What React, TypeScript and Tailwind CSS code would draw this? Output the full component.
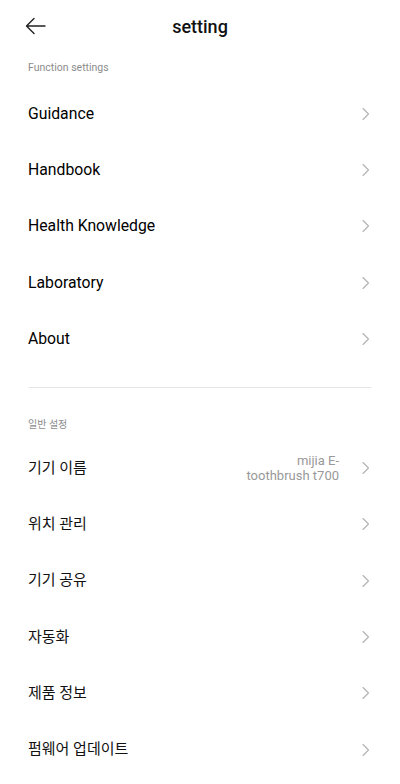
import React from 'react';

const font = { fontFamily: 'Roboto, "Noto Sans CJK KR", sans-serif' };

function Chevron() {
  return (
    <svg width="8" height="14" viewBox="0 0 8 14" fill="none" className="shrink-0">
      <path d="M1 1.5 L6.5 7 L1 12.5" stroke="#b3b3b3" strokeWidth="1.1" strokeLinecap="round" strokeLinejoin="round" />
    </svg>
  );
}

function BackArrow() {
  return (
    <svg width="22" height="18" viewBox="0 0 22 18" fill="none">
      <path d="M20 9 H2 M9 1.5 L1.5 9 L9 16.5" stroke="#222" strokeWidth="1.4" strokeLinecap="round" strokeLinejoin="round" />
    </svg>
  );
}

function Row({ title, value, korean }: { title: string; value?: string[]; korean?: boolean }) {
  return (
    <div className="flex h-[56.3px] items-center justify-between pl-[28px] pr-[30px]">
      <span className={korean ? 'text-[15px] text-[#111]' : 'text-[15.75px] text-black'}>{title}</span>
      <div className="flex items-center gap-[23px]">
        {value && (
          <div className="text-right text-[13px] leading-[15px] text-[#999]">
            {value.map((v) => (
              <div key={v}>{v}</div>
            ))}
          </div>
        )}
        <Chevron />
      </div>
    </div>
  );
}

export default function App() {
  const functionRows = ['Guidance', 'Handbook', 'Health Knowledge', 'Laboratory', 'About'];
  const generalRows = ['위치 관리', '기기 공유', '자동화', '제품 정보', '펌웨어 업데이트'];

  return (
    <div className="h-[784px] w-[400px] overflow-hidden bg-white" style={font}>
      {/* Header */}
      <div className="relative flex h-[52px] items-center justify-center">
        <div className="absolute left-[25px] top-[17px]">
          <BackArrow />
        </div>
        <span className="text-[18px] font-medium text-[#111]">setting</span>
      </div>

      {/* Function settings */}
      <div className="flex h-[33.5px] items-center pl-[28px] pb-[1px] text-[10.5px] text-[#8c8c8c]">
        Function settings
      </div>
      {functionRows.map((t) => (
        <Row key={t} title={t} />
      ))}

      <div className="mx-[29px] mt-[20px] h-px bg-[#e5e5e5]" />

      {/* General */}
      <div className="flex h-[52px] items-end pl-[28px] pb-[8px] text-[10px] leading-[14px] text-[#8c8c8c]">
        일반 설정
      </div>
      <Row title="기기 이름" value={['mijia E-', 'toothbrush t700']} korean />
      {generalRows.map((t) => (
        <Row key={t} title={t} korean />
      ))}
    </div>
  );
}
